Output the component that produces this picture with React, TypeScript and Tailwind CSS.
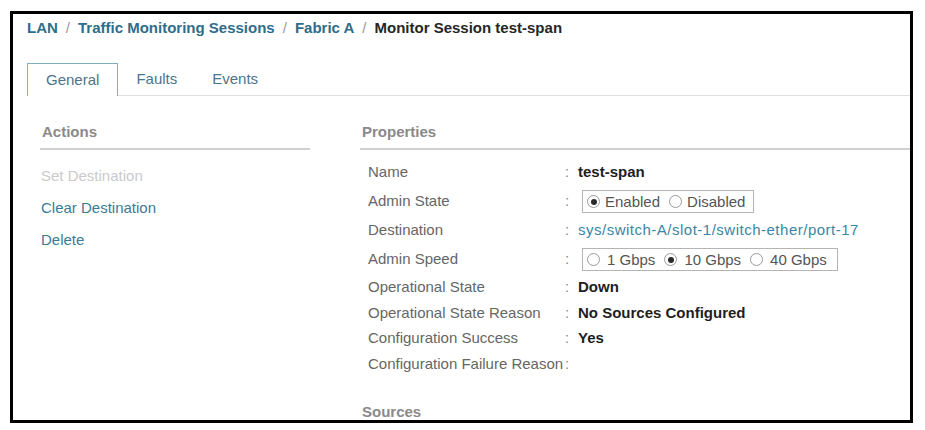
import React from "react";

function Radio({ checked }: { checked?: boolean }) {
  return (
    <span className="w-[13px] h-[13px] rounded-full border border-[#9a9a9a] bg-white flex items-center justify-center shrink-0">
      {checked && <span className="w-[6px] h-[6px] rounded-full bg-[#2a2a2a]" />}
    </span>
  );
}

function RadioGroup({
  options,
  selected,
  pr,
  gap,
  sep,
}: {
  options: string[];
  selected: number;
  pr: string;
  gap: string;
  sep: string;
}) {
  return (
    <div className={`ml-[4px] h-[23px] border border-[#b4b4b4] flex items-center pl-[4px] ${pr}`}>
      {options.map((o, i) => (
        <div key={o} className={`flex items-center ${gap} ${i > 0 ? sep : ""}`}>
          <Radio checked={i === selected} />
          <span className="text-[15px] text-[#555] leading-[18px]">{o}</span>
        </div>
      ))}
    </div>
  );
}

function Row({ label, h, children }: { label: string; h: string; children?: React.ReactNode }) {
  return (
    <div className={`flex items-center pl-[8px] ${h}`}>
      <span className="w-[197px] text-[15px] text-[#666] whitespace-nowrap">{label}</span>
      <span className="w-[13px] text-[15px] text-[#8a8a8a]">:</span>
      <div className="flex items-center text-[15px]">{children}</div>
    </div>
  );
}

export default function App() {
  return (
    <div className="w-[925px] h-[430px] bg-white pt-[11px] pl-[10px] font-['Liberation_Sans',Arial,sans-serif]">
      <div className="w-[903px] h-[412px] border-[3px] border-black overflow-hidden flex flex-col">
        {/* Breadcrumb */}
        <div className="pl-[14px] pt-[6px] flex items-center h-[22px] leading-[16px] text-[15px] font-bold whitespace-nowrap">
          <span className="text-[#2f6d8a]">LAN</span>
          <span className="mx-[8px] font-normal text-[#9a9a9a]">/</span>
          <span className="text-[#2f6d8a]">Traffic Monitoring Sessions</span>
          <span className="mx-[8px] font-normal text-[#9a9a9a]">/</span>
          <span className="text-[#2f6d8a]">Fabric A</span>
          <span className="mx-[8px] font-normal text-[#9a9a9a]">/</span>
          <span className="text-[#262626]">Monitor Session test-span</span>
        </div>

        {/* Tabs */}
        <div className="mt-[27px] ml-[14px] flex h-[38px] text-[15px]">
          <div className="px-[18px] flex items-center border-t border-l border-r border-[#7fb0c2] text-[#4d7589]">General</div>
          <div className="px-[18px] flex items-center border-b border-[#dedede] text-[#4d7589]">Faults</div>
          <div className="px-[17px] flex items-center border-b border-[#dedede] text-[#4d7589]">Events</div>
          <div className="flex-1 border-b border-[#dedede]" />
        </div>

        {/* Columns */}
        <div className="flex mt-[28px]">
          <div className="ml-[27px] w-[270px] shrink-0">
            <div className="pl-[2px] text-[15px] font-bold leading-[16px] pb-[8px] border-b-2 border-[#d0d0d0] text-[#8a8a8a]">Actions</div>
            <div className="mt-[10px] flex flex-col text-[15px] pl-[1px]">
              <div className="h-[32px] flex items-center text-[#cacaca]">Set Destination</div>
              <div className="h-[32px] flex items-center text-[#3b7b98]">Clear Destination</div>
              <div className="h-[33px] flex items-center text-[#3b7b98]">Delete</div>
            </div>
          </div>

          <div className="ml-[50px] flex-1">
            <div className="pl-[2px] text-[15px] font-bold leading-[16px] pb-[8px] border-b-2 border-[#d0d0d0] text-[#8a8a8a]">Properties</div>
            <div className="mt-[8px] flex flex-col">
              <Row label="Name" h="h-[29px]">
                <span className="font-bold text-[#1e1e1e]">test-span</span>
              </Row>
              <Row label="Admin State" h="h-[29px]">
                <RadioGroup options={["Enabled", "Disabled"]} selected={0} pr="pr-[8px]" gap="gap-[5px]" sep="ml-[9px]" />
              </Row>
              <Row label="Destination" h="h-[29px]">
                <span className="text-[#3a86a4] tracking-[0.5px]">sys/switch-A/slot-1/switch-ether/port-17</span>
              </Row>
              <Row label="Admin Speed" h="h-[29px]">
                <RadioGroup options={["1 Gbps", "10 Gbps", "40 Gbps"]} selected={1} pr="pr-[10px]" gap="gap-[7px]" sep="ml-[9px]" />
              </Row>
              <Row label="Operational State" h="h-[27px]">
                <span className="font-bold text-[#1e1e1e]">Down</span>
              </Row>
              <Row label="Operational State Reason" h="h-[25px]">
                <span className="font-bold text-[#1e1e1e]">No Sources Configured</span>
              </Row>
              <Row label="Configuration Success" h="h-[25px]">
                <span className="font-bold text-[#1e1e1e]">Yes</span>
              </Row>
              <Row label="Configuration Failure Reason" h="h-[27px]" />
            </div>
            <div className="mt-[26px] pl-[2px] text-[15px] font-bold leading-[16px] text-[#8a8a8a]">Sources</div>
          </div>
        </div>
      </div>
    </div>
  );
}
